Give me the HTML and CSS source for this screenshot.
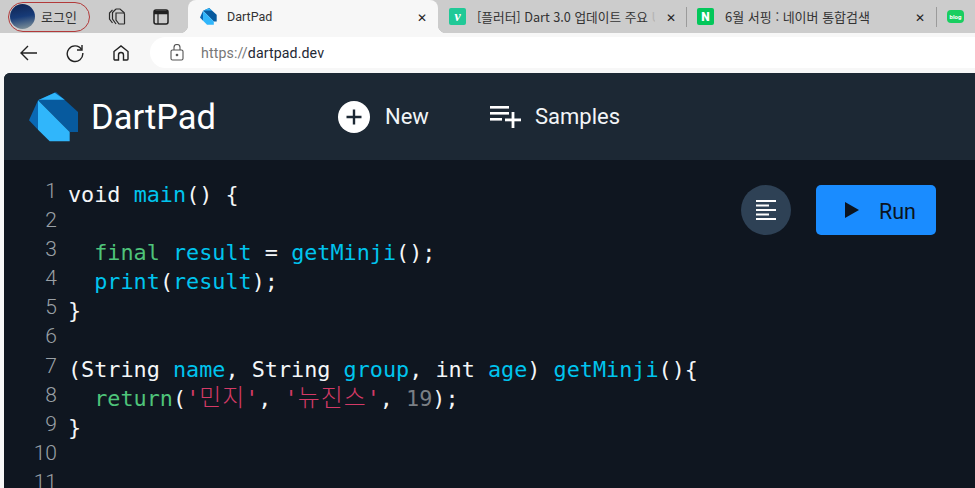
FILE: index.html
```html
<!DOCTYPE html>
<html lang="ko">
<head>
<meta charset="utf-8">
<title>DartPad</title>
<link rel="stylesheet" href="styles.css">
</head>
<body>
<div class="tabstrip">
  <div class="profile">
    <span class="avatar"></span>
    <span class="profile-label">로그인</span>
  </div>
  <svg class="strip-icon workspaces" width="18" height="18" viewBox="0 0 18 18" fill="none" stroke="#2b2b2b" stroke-width="1.2"><path d="M4.500 1.800 1.500 5v6l3 4"/><path d="M8 1 4.500 4.500v6.500l3.500 5"/><path d="M8 1h4l4.500 4"/><path d="M8 5h7.500a1 1 0 0 1 1 1v8.500a1 1 0 0 1-1 1.500H11l-3-4V5z"/></svg>
  <svg class="strip-icon vertical" width="16" height="16" viewBox="0 0 16 16" fill="none" stroke="#1f1f1f" stroke-width="1.5"><rect x="1" y="1" width="14" height="14" rx="2"/><path d="M1 3.500h14" stroke-width="3.500"/><path d="M5 5v10" stroke-width="1.2"/></svg>
  <div class="tab active">
    <svg class="favicon" width="17" height="17" viewBox="0 0 50 50"><use href="#dart"/></svg>
    <span class="tab-title dart-title">DartPad</span>
    <span class="tab-close">✕</span>
  </div>
  <div class="tab velog">
    <span class="badge badge-v">v</span>
    <span class="tab-title">[플러터] Dart 3.0 업데이트 주요 <span class="tab-fade">U</span></span>
    <span class="tab-close">✕</span>
  </div>
  <div class="tab naver">
    <span class="badge badge-n">N</span>
    <span class="tab-title">6월 서핑 : 네이버 통합검색</span>
    <span class="tab-close">✕</span>
  </div>
  <div class="tab blog">
    <span class="badge badge-b">blog</span>
  </div>
</div>
<div class="toolbar">
  <svg class="nav-icon back" width="20" height="20" viewBox="0 0 20 20" fill="none" stroke="#222" stroke-width="1.4"><path d="M18 10H2M9 3l-7 7 7 7"/></svg>
  <svg class="nav-icon reload" width="20" height="20" viewBox="0 0 20 20" fill="none" stroke="#222" stroke-width="1.4"><path d="M16.6 6.500A7.800 7.800 0 1 0 17.800 10"/><path d="M17 2v5h-5"/></svg>
  <svg class="nav-icon home" width="20" height="20" viewBox="0 0 20 20" fill="none" stroke="#222" stroke-width="1.4"><path d="M3 8.500 10 3l7 5.500V16a1 1 0 0 1-1 1h-3.500v-5a2.500 2.500 0 0 0-5 0v5H4a1 1 0 0 1-1-1V8.500z"/></svg>
  <div class="urlbar">
    <svg class="lock" width="14" height="17" viewBox="0 0 14 17" fill="none" stroke="#555" stroke-width="1.1"><rect x="1" y="6" width="12" height="10" rx="1.500"/><path d="M4 6V3.500a3 3 0 0 1 6 0V6"/><circle cx="7" cy="11" r=".8" fill="#555"/></svg>
    <span class="url"><span class="url-scheme">https://</span>dartpad.dev</span>
  </div>
</div>
<main class="app">
  <header class="app-header">
    <svg class="logo" width="50" height="50" viewBox="0 0 50 50"><use href="#dart"/></svg>
    <span class="brand">DartPad</span>
    <div class="action new">
      <svg width="32" height="32" viewBox="0 0 32 32"><circle cx="16" cy="16" r="16" fill="#fff"/><path d="M16 8.500v15M8.500 16h15" stroke="#1c2834" stroke-width="2.4"/></svg>
      <span>New</span>
    </div>
    <div class="action samples">
      <svg width="32" height="24" viewBox="0 0 32 24" fill="#fff"><rect x="1" y="1" width="19" height="2.600"/><rect x="1" y="7" width="19" height="2.600"/><rect x="1" y="13" width="12" height="2.600"/><rect x="16" y="13.500" width="16" height="2.800"/><rect x="22.600" y="7" width="2.800" height="16"/></svg>
      <span>Samples</span>
    </div>
  </header>
  <section class="editor">
    <div class="gutter">
      <span>1</span><span>2</span><span>3</span><span>4</span><span>5</span><span>6</span><span>7</span><span>8</span><span>9</span><span>10</span><span>11</span>
    </div>
    <pre class="code"><code>void <i class="fn">main</i>() {

  <i class="kw">final</i> <i class="fn">result</i> = <i class="fn">getMinji</i>();
  <i class="fn">print</i>(<i class="fn">result</i>);
}

(String <i class="fn">name</i>, String <i class="fn">group</i>, int <i class="fn">age</i>) <i class="fn">getMinji</i>(){
  <i class="kw">return</i>(<i class="str">'<b class="ko">민지</b>'</i>, <i class="str">'<b class="ko">뉴진스</b>'</i>, <i class="num">19</i>);
}</code></pre>
    <div class="editor-actions">
      <button class="format" type="button" aria-label="Format">
        <svg width="20" height="20" viewBox="0 0 20 20" fill="#fff"><rect y="0" width="20" height="2"/><rect y="4.500" width="13" height="2"/><rect y="9" width="20" height="2"/><rect y="13.500" width="13" height="2"/><rect y="18" width="20" height="2"/></svg>
      </button>
      <button class="run" type="button">
        <svg width="16" height="18" viewBox="0 0 16 18"><path d="M1 1v16l14-8z" fill="#0b1420"/></svg>
        <span class="run-label">Run</span>
      </button>
    </div>
  </section>
</main>
<svg class="defs" width="0" height="0">
  <defs>
    <g id="dart">
      <path d="M9 8.300 27 0 49 20V40H40.700z" fill="#075a9e"/>
      <path d="M9 8.300 25.700 .7 35.700 7.700H12z" fill="#30b6fb"/>
      <path d="M9 8.300 40.700 40V49.300H20.700L9 37.700z" fill="#30b6fb"/>
      <path d="M9 8.300V37.700L0 28.300z" fill="#0a68b3"/>
    </g>
  </defs>
</svg>
</body>
</html>
```
FILE: styles.css
```css
* { box-sizing: border-box; }
html, body { margin: 0; padding: 0; }
body {
  width: 975px;
  height: 488px;
  overflow: hidden;
  background: #f7f7f7;
  font-family: "Roboto", "Noto Sans CJK KR", sans-serif;
}
.defs { position: absolute; }
.tabstrip {
  display: flex;
  align-items: center;
  height: 33px;
  background: #cccccc;
  padding-left: 8px;
  overflow: hidden;
  white-space: nowrap;
}
.profile {
  display: flex;
  align-items: center;
  gap: 6px;
  width: 82px;
  height: 30px;
  flex: none;
  padding-left: 1px;
  border: 1.5px solid #b23a3a;
  border-radius: 15px;
}
.avatar {
  width: 25px;
  height: 25px;
  flex: none;
  border-radius: 50%;
  background: linear-gradient(170deg, #0f2350 0%, #173b78 50%, #8a9a9c 100%);
}
.profile-label { font: 13px "Noto Sans CJK KR", sans-serif; color: #333; }
.strip-icon { flex: none; }
.workspaces { margin-left: 18px; }
.vertical { margin-left: 27px; }
.tab {
  display: flex;
  align-items: center;
  height: 33px;
  flex: none;
  font: 13px "Noto Sans CJK KR", "Roboto", sans-serif;
  color: #333;
}
.tab.active {
  position: relative;
  width: 250px;
  margin-left: 19px;
  padding: 0 9px 0 12px;
  background: #f7f7f7;
  border-radius: 8px 8px 0 0;
}
.tab.active::before,
.tab.active::after {
  content: "";
  position: absolute;
  bottom: 0;
  width: 8px;
  height: 8px;
}
.tab.active::before {
  left: -8px;
  background: radial-gradient(circle at 0 0, #ccc 8px, #f7f7f7 8.500px);
}
.tab.active::after {
  right: -8px;
  background: radial-gradient(circle at 100% 0, #ccc 8px, #f7f7f7 8.500px);
}
.favicon { margin-right: 10px; flex: none; }
.tab-title { flex: 1; overflow: hidden; }
.dart-title { font: 12.500px "Roboto", sans-serif; }
.tab-fade { color: #b5b5b5; }
.tab-close { width: 14px; flex: none; font-size: 12px; color: #222; text-align: center; }
.badge {
  width: 17px;
  height: 17px;
  flex: none;
  display: flex;
  align-items: center;
  justify-content: center;
  border-radius: 2px;
  color: #fff;
  font-weight: 700;
}
.badge-v { background: #20c997; font: italic 700 14px "Liberation Serif", serif; }
.badge-n { background: #03c75a; font: 900 12px "Roboto", sans-serif; }
.badge-b { background: #19ce60; font: 700 6px "Roboto", sans-serif; height: 13px; border-radius: 4px; }
.velog { width: 249px; padding: 0 9px 0 11px; }
.velog .tab-title { margin: 0 9px 0 11px; font-size: 12.700px; }
.naver { width: 250px; padding-right: 9px; margin-left: -1px; }
.naver .tab-title { margin-left: 11px; }
.naver::before, .blog::before {
  content: "";
  width: 1px;
  height: 20px;
  background: #9b9b9b;
  margin-right: 10px;
  flex: none;
}
.toolbar {
  display: flex;
  align-items: center;
  height: 40px;
  padding: 0 0 1px 19px;
  background: #f7f7f7;
}
.nav-icon { flex: none; }
.reload { margin-left: 26px; }
.home { margin-left: 26px; }
.urlbar {
  flex: 1;
  display: flex;
  align-items: center;
  height: 31px;
  margin-left: 19px;
  padding-left: 20px;
  background: #fff;
  border-radius: 16px 0 0 16px;
}
.lock { flex: none; }
.url { margin-left: 17px; font: 14.200px "Roboto", sans-serif; letter-spacing: .1px; color: #1f2a36; }
.url-scheme { color: #777; }
.app {
  height: 415px;
  margin-left: 4px;
  background: #0f1620;
  border-radius: 6px 0 0 0;
  overflow: hidden;
}
.app-header {
  display: flex;
  align-items: center;
  height: 87px;
  padding-left: 25px;
  background: #1c2834;
  color: #fff;
}
.logo { flex: none; }
.brand { margin-left: 12px; width: 247px; font: 34.500px "Roboto", sans-serif; color: #fff; }
.action {
  display: flex;
  align-items: center;
  gap: 15px;
  font: 400 22px "Roboto", sans-serif;
  color: #f2f5f7;
}
.new { width: 151px; }
.samples { gap: 14px; }
.editor {
  position: relative;
  display: flex;
  padding-top: 20px;
}
.gutter {
  display: flex;
  flex-direction: column;
  width: 53px;
  flex: none;
  font: 300 21px/29.100px "Roboto", sans-serif;
  color: #9aa0a6;
  text-align: right;
}
.gutter span { display: block; position: relative; top: -3px; }
.code {
  margin: 0 0 0 11px;
  font: 21.800px/29.100px "DejaVu Sans Mono", "Noto Sans CJK KR", monospace;
  color: #f4f6f8;
}
.code i { font-style: normal; }
.fn { color: #00c4ee; }
.kw { color: #4ec47a; }
.str { color: #d43a66; }
.ko { font: 300 23.900px/1 "Noto Sans CJK KR", sans-serif; letter-spacing: 1px; }
.num { color: #7a7f85; }
.editor-actions {
  position: absolute;
  top: 25px;
  left: 737px;
  display: flex;
  align-items: center;
  gap: 25px;
}
.format {
  width: 50px;
  height: 50px;
  padding: 0;
  display: flex;
  align-items: center;
  justify-content: center;
  border: 0;
  border-radius: 50%;
  background: #2e4155;
}
.run {
  display: flex;
  align-items: center;
  gap: 19px;
  width: 120px;
  height: 50px;
  padding: 0 0 0 28px;
  border: 0;
  border-radius: 5px;
  background: #1a8cff;
  color: #0b1420;
  font: 21.500px "Roboto", sans-serif;
}
.run-label { padding-top: 2px; }
```
